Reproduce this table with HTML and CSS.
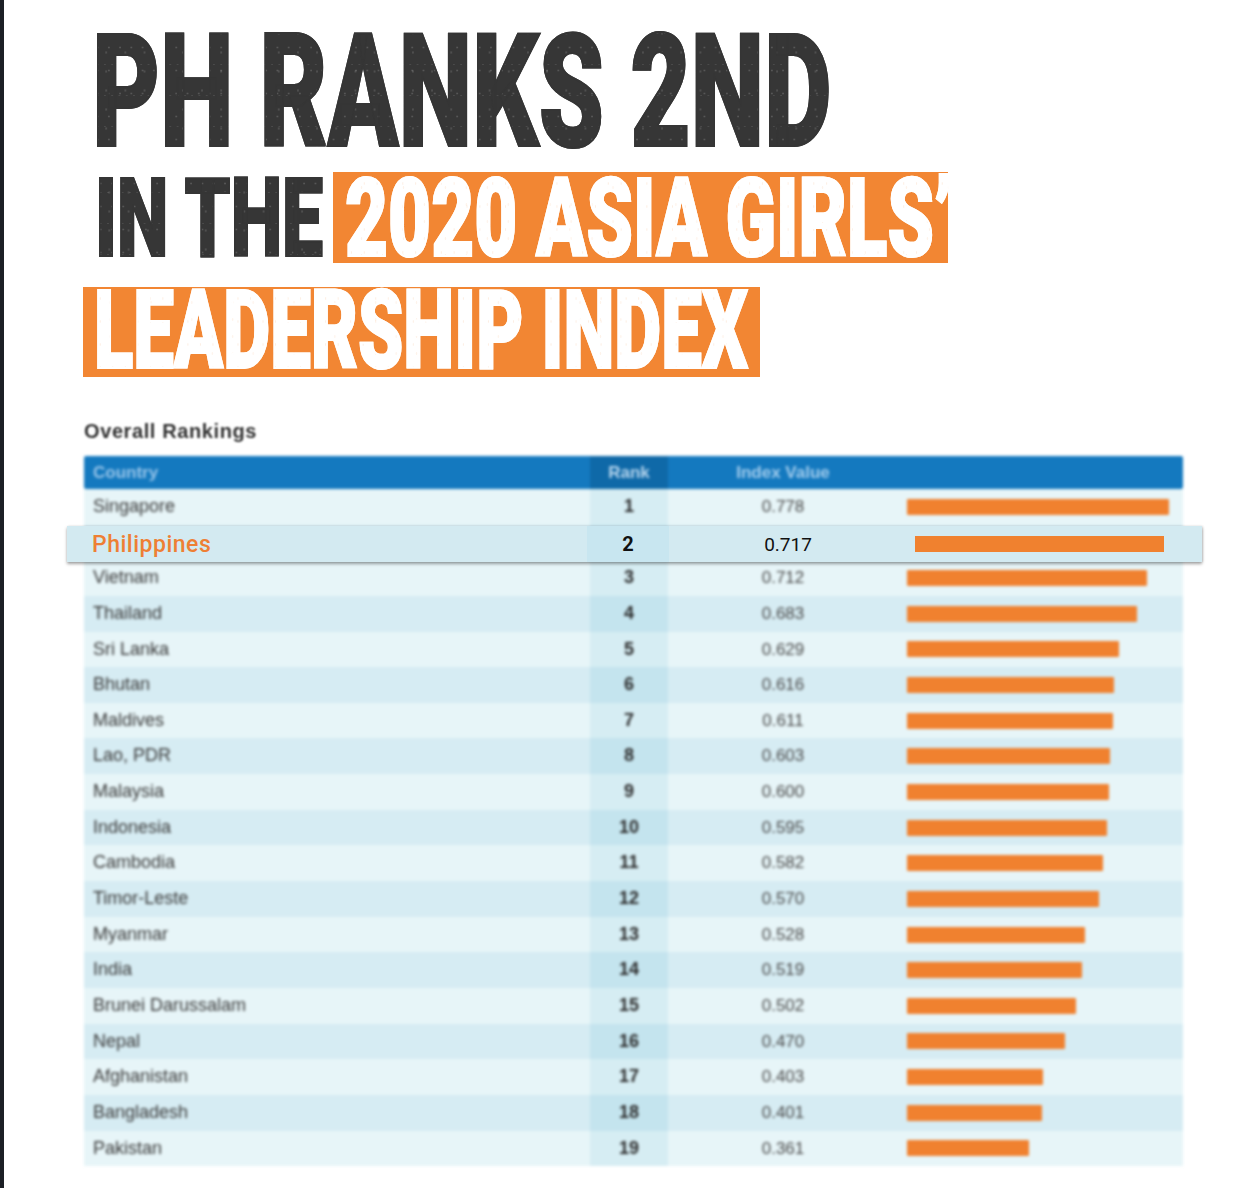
FILE: index.html
```html
<!DOCTYPE html>
<html lang="en">
<head>
<meta charset="utf-8">
<title>PH Ranks 2nd in the 2020 Asia Girls' Leadership Index</title>
<link rel="stylesheet" href="styles.css">
</head>
<body>
<div class="page">
  <h1 class="title">
    <div class="line line1"><span class="ink ink-dark ink1">PH RANKS 2ND</span></div>
    <div class="line line2">
      <div class="dark-part"><span class="ink ink-dark ink2">IN THE</span></div>
      <div class="orange box1"><span class="ink ink-light ink3">2020 ASIA GIRLS’</span></div>
    </div>
    <div class="line line3">
      <div class="orange box2"><span class="ink ink-light ink4">LEADERSHIP INDEX</span></div>
    </div>
  </h1>

  <h2 class="subtitle">Overall Rankings</h2>

  <div class="table">
    <div class="blurred">
      <div class="head">
        <div class="hc hc-country">Country</div>
        <div class="hc hc-rank">Rank</div>
        <div class="hc hc-index">Index Value</div>
        <div class="hc hc-bar"></div>
      </div>
      <div class="body">
        <div class="row"><div class="c-country">Singapore</div><div class="c-rank">1</div><div class="c-val">0.778</div><div class="c-bar"><span class="bar" style="width:262px"></span></div></div>
        <div class="row row-under" aria-hidden="true"><div class="c-country"></div><div class="c-rank"></div><div class="c-val"></div><div class="c-bar"></div></div>
        <div class="row"><div class="c-country">Vietnam</div><div class="c-rank">3</div><div class="c-val">0.712</div><div class="c-bar"><span class="bar" style="width:240px"></span></div></div>
        <div class="row"><div class="c-country">Thailand</div><div class="c-rank">4</div><div class="c-val">0.683</div><div class="c-bar"><span class="bar" style="width:230px"></span></div></div>
        <div class="row"><div class="c-country">Sri Lanka</div><div class="c-rank">5</div><div class="c-val">0.629</div><div class="c-bar"><span class="bar" style="width:212px"></span></div></div>
        <div class="row"><div class="c-country">Bhutan</div><div class="c-rank">6</div><div class="c-val">0.616</div><div class="c-bar"><span class="bar" style="width:207px"></span></div></div>
        <div class="row"><div class="c-country">Maldives</div><div class="c-rank">7</div><div class="c-val">0.611</div><div class="c-bar"><span class="bar" style="width:206px"></span></div></div>
        <div class="row"><div class="c-country">Lao, PDR</div><div class="c-rank">8</div><div class="c-val">0.603</div><div class="c-bar"><span class="bar" style="width:203px"></span></div></div>
        <div class="row"><div class="c-country">Malaysia</div><div class="c-rank">9</div><div class="c-val">0.600</div><div class="c-bar"><span class="bar" style="width:202px"></span></div></div>
        <div class="row"><div class="c-country">Indonesia</div><div class="c-rank">10</div><div class="c-val">0.595</div><div class="c-bar"><span class="bar" style="width:200px"></span></div></div>
        <div class="row"><div class="c-country">Cambodia</div><div class="c-rank">11</div><div class="c-val">0.582</div><div class="c-bar"><span class="bar" style="width:196px"></span></div></div>
        <div class="row"><div class="c-country">Timor-Leste</div><div class="c-rank">12</div><div class="c-val">0.570</div><div class="c-bar"><span class="bar" style="width:192px"></span></div></div>
        <div class="row"><div class="c-country">Myanmar</div><div class="c-rank">13</div><div class="c-val">0.528</div><div class="c-bar"><span class="bar" style="width:178px"></span></div></div>
        <div class="row"><div class="c-country">India</div><div class="c-rank">14</div><div class="c-val">0.519</div><div class="c-bar"><span class="bar" style="width:175px"></span></div></div>
        <div class="row"><div class="c-country">Brunei Darussalam</div><div class="c-rank">15</div><div class="c-val">0.502</div><div class="c-bar"><span class="bar" style="width:169px"></span></div></div>
        <div class="row"><div class="c-country">Nepal</div><div class="c-rank">16</div><div class="c-val">0.470</div><div class="c-bar"><span class="bar" style="width:158px"></span></div></div>
        <div class="row"><div class="c-country">Afghanistan</div><div class="c-rank">17</div><div class="c-val">0.403</div><div class="c-bar"><span class="bar" style="width:136px"></span></div></div>
        <div class="row"><div class="c-country">Bangladesh</div><div class="c-rank">18</div><div class="c-val">0.401</div><div class="c-bar"><span class="bar" style="width:135px"></span></div></div>
        <div class="row"><div class="c-country">Pakistan</div><div class="c-rank">19</div><div class="c-val">0.361</div><div class="c-bar"><span class="bar" style="width:122px"></span></div></div>
      </div>
    </div>

    <div class="highlight">
      <div class="h-country">Philippines</div>
      <div class="h-rank">2</div>
      <div class="h-val">0.717</div>
      <div class="h-bar"><span class="hbar"></span></div>
    </div>
  </div>
</div>
</body>
</html>
```

FILE: styles.css
```css
html, body {
  margin: 0;
  padding: 0;
  background: #ffffff;
}

.page {
  box-sizing: border-box;
  min-height: 1188px;
  border-left: 4px solid #1c1f25;
  padding-top: 13px;
  overflow: hidden;
  font-family: "Liberation Sans", Arial, sans-serif;
}

/* ---------- headline ---------- */
.title {
  margin: 0;
  font-family: Roboto, "Liberation Sans", sans-serif;
  font-weight: 900;
  white-space: nowrap;
}

.line {
  display: flex;
}

.ink {
  display: inline-block;
  transform-origin: 0 50%;
  -webkit-text-stroke: 2px currentColor;
  -webkit-text-fill-color: transparent;
  -webkit-background-clip: text;
  background-clip: text;
}

/* subtle distressed print texture */
.ink-dark {
  color: #353535;
  background-color: #363636;
  background-image:
    radial-gradient(circle, rgba(255, 255, 255, 0.16) 0.8px, transparent 1.4px),
    radial-gradient(circle, rgba(255, 255, 255, 0.12) 1px, transparent 1.6px),
    radial-gradient(circle, rgba(255, 255, 255, 0.10) 0.7px, transparent 1.2px);
  background-size: 17px 23px, 29px 19px, 11px 31px;
  background-position: 0 0, 7px 11px, 3px 5px;
}

.ink-light {
  color: #ffffff;
  background-color: #ffffff;
  background-image:
    radial-gradient(circle, rgba(242, 134, 51, 0.14) 0.8px, transparent 1.4px),
    radial-gradient(circle, rgba(242, 134, 51, 0.10) 1px, transparent 1.6px);
  background-size: 19px 23px, 31px 17px;
  background-position: 0 0, 9px 7px;
}

.line1 {
  height: 159px;
  padding-left: 88px;
  font-size: 158px;
  line-height: 158px;
}
.ink1 { transform: scaleX(0.661); }

.line2 {
  height: 91px;
  margin-bottom: 24px;
  font-size: 110px;
  line-height: 93px;
}

.dark-part {
  box-sizing: border-box;
  width: 329px;
  padding-left: 91px;
}
.ink2 { transform: scaleX(0.665); }

.orange {
  box-sizing: border-box;
  background: #f28633;
}

.box1 {
  width: 615px;
  height: 91px;
  padding-left: 12px;
}
.ink3 { transform: scaleX(0.676); }

.line3 {
  height: 90px;
  font-size: 110px;
  line-height: 88px;
}

.box2 {
  width: 677px;
  height: 90px;
  margin-left: 79px;
  padding-left: 11px;
}
.ink4 { transform: scaleX(0.659); }

/* ---------- subtitle ---------- */
.subtitle {
  margin: 42px 0 13px 80px;
  font-size: 20px;
  line-height: 24px;
  font-weight: 700;
  color: #333333;
  letter-spacing: 0.6px;
  filter: blur(1.3px);
}

/* ---------- table ---------- */
.table {
  position: relative;
  width: 1099px;
  margin-left: 80px;
}

.blurred {
  filter: blur(1.4px);
}

.head,
.row {
  display: grid;
  grid-template-columns: 506px 78px 230px 1fr;
}

.head {
  height: 33px;
  background: #1479bf;
  border-radius: 2px;
  font-size: 17px;
  font-weight: 700;
  line-height: 33px;
}

.hc-country {
  padding-left: 9px;
  color: #9ac6ea;
}
.hc-rank {
  background: #0f69a8;
  text-align: center;
  color: #b9d7ef;
}
.hc-index {
  text-align: center;
  color: #a5ceee;
}

.row {
  height: 35.65px;
  line-height: 35.65px;
  background: #e7f5f8;
}
.row:nth-child(even) {
  background: #d6ecf3;
}

.c-country {
  padding-left: 9px;
  font-size: 18px;
  color: #383838;
}
.c-rank {
  text-align: center;
  font-size: 18px;
  font-weight: 700;
  color: #2a2a2a;
  background: #d6edf3;
}
.row:nth-child(even) .c-rank {
  background: #c4e4ee;
}
.c-val {
  text-align: center;
  font-size: 17px;
  color: #484848;
}
.c-bar {
  display: flex;
  align-items: center;
  padding-left: 9px;
}
.bar {
  display: block;
  height: 16px;
  background: #f0812f;
  border-radius: 1px;
}

/* ---------- highlighted row (overlay) ---------- */
.highlight {
  position: absolute;
  top: 70px;
  left: -17px;
  width: 1135px;
  height: 36px;
  display: grid;
  grid-template-columns: 520px 82px 234px 1fr;
  align-items: center;
  background: #d3eaf1;
  box-shadow: 0 2px 3px rgba(0, 0, 0, 0.35), 1px 0 2px rgba(0, 0, 0, 0.12);
  font-family: Roboto, "Liberation Sans", sans-serif;
}

.h-country {
  padding-left: 25px;
  font-size: 23px;
  font-weight: 500;
  letter-spacing: 0.5px;
  color: #ee7f34;
}
.h-rank {
  align-self: stretch;
  display: flex;
  align-items: center;
  justify-content: center;
  background: #c8e6f0;
  font-size: 20px;
  font-weight: 700;
  color: #111111;
}
.h-val {
  text-align: center;
  font-size: 19px;
  color: #111111;
  padding-left: 4px;
}
.h-bar {
  display: flex;
  align-items: center;
  padding-left: 12px;
}
.hbar {
  display: block;
  width: 249px;
  height: 16px;
  background: #f0812f;
}
```
